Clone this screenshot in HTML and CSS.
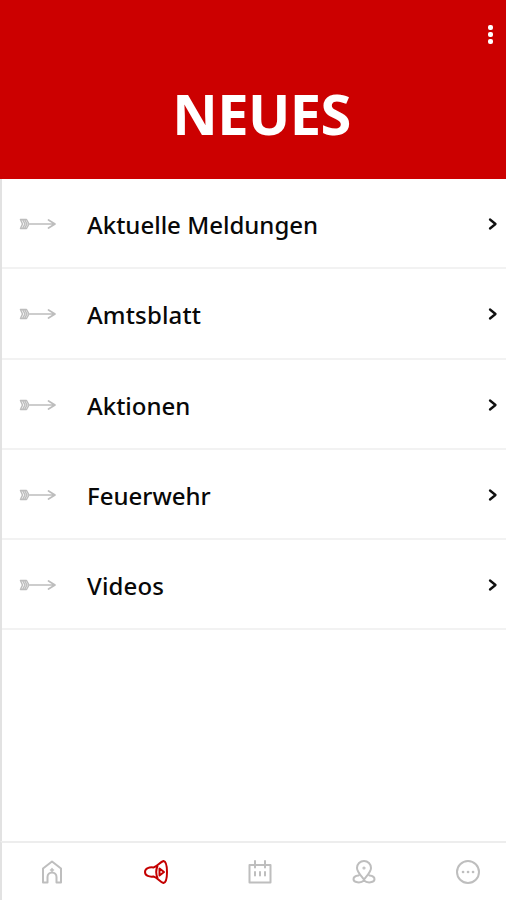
FILE: index.html
```
<!DOCTYPE html>
<html lang="de">
<head>
<meta charset="utf-8">
<meta name="viewport" content="width=device-width, initial-scale=1">
<title>Neues</title>
<link rel="stylesheet" href="styles.css">
</head>
<body>
<svg class="symbols" aria-hidden="true">
  <symbol id="arrow" viewBox="0 0 38 14">
    <path d="M11 7H36M29.5 3L36 7l-6.500 4" stroke-width="1.700"/>
    <path d="M1.500 2.500h6L10 7l-2.500 4.500h-6L3.500 7zM3.500 2.500L6 7l-2.500 4.500M5.500 2.500L8 7l-2.500 4.500" stroke-width="1.500"/>
  </symbol>
  <symbol id="chevron" viewBox="0 0 10 14"><path d="M2 2.500L7.500 7l-5.500 4.500" stroke-width="2.300"/></symbol>
</svg>
<div class="app">
  <header class="header">
    <button class="menu" aria-label="Menü"><i></i><i></i><i></i></button>
    <h1 class="title">NEUES</h1>
  </header>
  <main class="list">
    <a class="row"><svg class="arrow"><use href="#arrow"/></svg><span class="label">Aktuelle Meldungen</span><svg class="chevron"><use href="#chevron"/></svg></a>
    <a class="row"><svg class="arrow"><use href="#arrow"/></svg><span class="label amtsblatt">Amtsblatt</span><svg class="chevron"><use href="#chevron"/></svg></a>
    <a class="row"><svg class="arrow"><use href="#arrow"/></svg><span class="label">Aktionen</span><svg class="chevron"><use href="#chevron"/></svg></a>
    <a class="row"><svg class="arrow"><use href="#arrow"/></svg><span class="label">Feuerwehr</span><svg class="chevron"><use href="#chevron"/></svg></a>
    <a class="row"><svg class="arrow"><use href="#arrow"/></svg><span class="label videos">Videos</span><svg class="chevron"><use href="#chevron"/></svg></a>
  </main>
  <nav class="tabs">
    <a class="tab"><svg viewBox="0 0 26 26"><path d="M4 23.500V9.500L13 2.500l9 7v14h-4.500V18a4.500 4.500 0 0 0-9 0v5.500z"/><path d="M13 9.500v3M11.500 11h3" stroke-width="1.500"/></svg></a>
    <a class="tab active"><svg viewBox="0 0 26 26"><path d="M20.500 2C17 3 14.500 7.500 10.500 8.500 6.500 8 2 9 2 13s4.500 5 8.500 4.500C14.500 18.500 17 23 20.500 24 23 23.500 24 19 24 13S23 2.500 20.500 2zM14.500 7c-1.500 3.500-1.500 8.500 0 12M16.500 9.500v7l4.500-3.500z"/></svg></a>
    <a class="tab"><svg viewBox="0 0 26 26"><path d="M2.500 6h21v17.500h-21zM8 2v6.500M18 2v6.500"/><path d="M8 13v3.500M13 13v3.500M18 13v3.500" stroke-width="2"/></svg></a>
    <a class="tab"><svg viewBox="0 0 26 26"><path d="M13 20.500C10 16.500 6 13 6 9a7 7 0 0 1 14 0C20 13 16 16.500 13 20.500zM7.500 16.500c-3 .300-5 1.800-5 3.700 0 3.300 7 4.500 10.500 1.300 3.500 3.200 10.500 2 10.500-1.300 0-1.900-2-3.400-5-3.700"/><circle cx="13" cy="9" r=".6"/></svg></a>
    <a class="tab"><svg viewBox="0 0 26 26"><circle cx="13" cy="13" r="11"/><path d="M8 13h.1M13 13h.1M18 13h.1" stroke-width="2.600"/></svg></a>
  </nav>
</div>
</body>
</html>
```
FILE: styles.css
```
* { box-sizing: border-box; }
body { margin: 0; background: #fff; font-family: "Noto Sans", "Open Sans", sans-serif; }
svg { fill: none; stroke: currentColor; stroke-linecap: round; stroke-linejoin: round; }
.symbols { display: none; }
.app { height: 900px; display: flex; flex-direction: column; }
.header { height: 179px; background: #c00; color: #fff; display: flex; flex-direction: column; }
.menu { align-self: flex-end; height: 19px; width: 8px; margin: 25px 12px 0 0; padding: 0; border: 0; background: none; display: flex; flex-direction: column; align-items: center; justify-content: space-between; }
.menu i { width: 5px; height: 5px; border-radius: 2px; background: #fff; }
.title { margin: 31px 0 0 17px; text-align: center; font-size: 56px; line-height: 76px; font-weight: 700; letter-spacing: -0.6px; }
.list { flex: 1; border-left: 2px solid #e2e2e2; }
.row { height: 90.300px; display: flex; align-items: center; padding: 2px 8px 0 17px; border-bottom: 2px solid #f2f2f2; }
.arrow { width: 38px; height: 14px; color: #bdbdbd; }
.chevron { width: 10px; height: 14px; color: #111; }
.label { flex: 1; margin-left: 30px; padding-top: 2px; font-size: 24px; line-height: 34px; font-weight: 500; color: #080808; white-space: nowrap; }
.amtsblatt { letter-spacing: 0.15px; }
.videos { letter-spacing: 0.15px; }
.tabs { height: 59px; display: grid; grid-template-columns: repeat(5, 104px); border-top: 2px solid #ededed; border-left: 2px solid #e2e2e2; }
.tab { display: flex; align-items: center; justify-content: center; padding-right: 4px; color: #bebebe; }
.tab svg { width: 26px; height: 26px; stroke-width: 2; }
.tab.active { color: #c40000; }
```
